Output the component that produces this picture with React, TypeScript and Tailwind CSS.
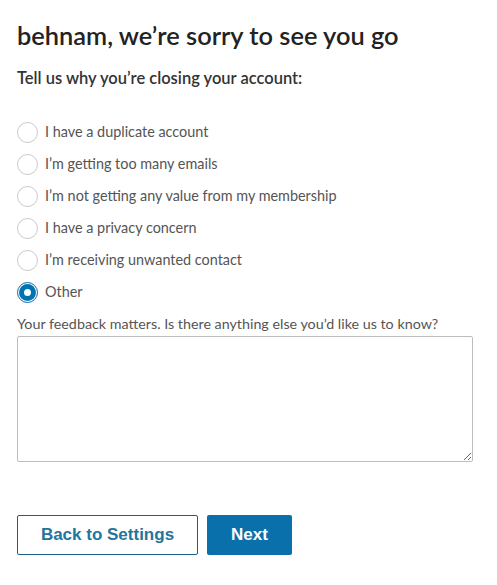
import { useState } from 'react'

const reasons = [
  'I have a duplicate account',
  'I’m getting too many emails',
  'I’m not getting any value from my membership',
  'I have a privacy concern',
  'I’m receiving unwanted contact',
  'Other',
]

function Radio({ checked }: { checked: boolean }) {
  if (checked) {
    return (
      <span className="flex h-[21px] w-[21px] shrink-0 items-center justify-center rounded-full border border-[#0b6aa2] bg-white">
        <span className="flex h-[17px] w-[17px] items-center justify-center rounded-full bg-[#0073b1]">
          <span className="h-[7px] w-[7px] rounded-full bg-white" />
        </span>
      </span>
    )
  }
  return <span className="h-[21px] w-[21px] shrink-0 rounded-full border border-[#c8c8c8] bg-white" />
}

export default function App() {
  const [picked, setPicked] = useState(5)

  return (
    <main className="min-h-[585px] w-[497px] bg-white px-[17px] pt-[18px] font-['Lato','Open_Sans',sans-serif]">
      <h1 className="text-[25.4px] font-semibold leading-[34px] text-[#222]">
        behnam, we’re sorry to see you go
      </h1>
      <p className="mt-[15px] text-[16.5px] font-semibold leading-[22px] text-[#333]">
        Tell us why you’re closing your account:
      </p>

      <ul className="mt-[27px] flex flex-col">
        {reasons.map((r, i) => (
          <li key={r}>
            <label className="flex h-[32px] cursor-pointer items-center gap-[7px]" onClick={() => setPicked(i)}>
              <Radio checked={picked === i} />
              <span className="text-[14.4px] leading-[20px] text-[#555]">{r}</span>
            </label>
          </li>
        ))}
      </ul>

      <p className="mt-[6px] text-[14.3px] leading-[20px] text-[#555]">
        Your feedback matters. Is there anything else you’d like us to know?
      </p>
      <textarea className="mt-[2px] block h-[126px] w-[456px] resize-y rounded-[2px] border border-[#bdbdbd] outline-none" />

      <div className="mt-[53px] flex gap-[9px] font-['Liberation_Sans',Arial,sans-serif]">
        <button className="h-[40px] w-[181px] rounded-[2px] border border-[#1d5f80] bg-white text-[17px] font-bold text-[#24759c]">
          Back to Settings
        </button>
        <button className="h-[40px] w-[85px] rounded-[2px] bg-[#0a70ab] text-[17px] font-bold text-white">
          Next
        </button>
      </div>
    </main>
  )
}
